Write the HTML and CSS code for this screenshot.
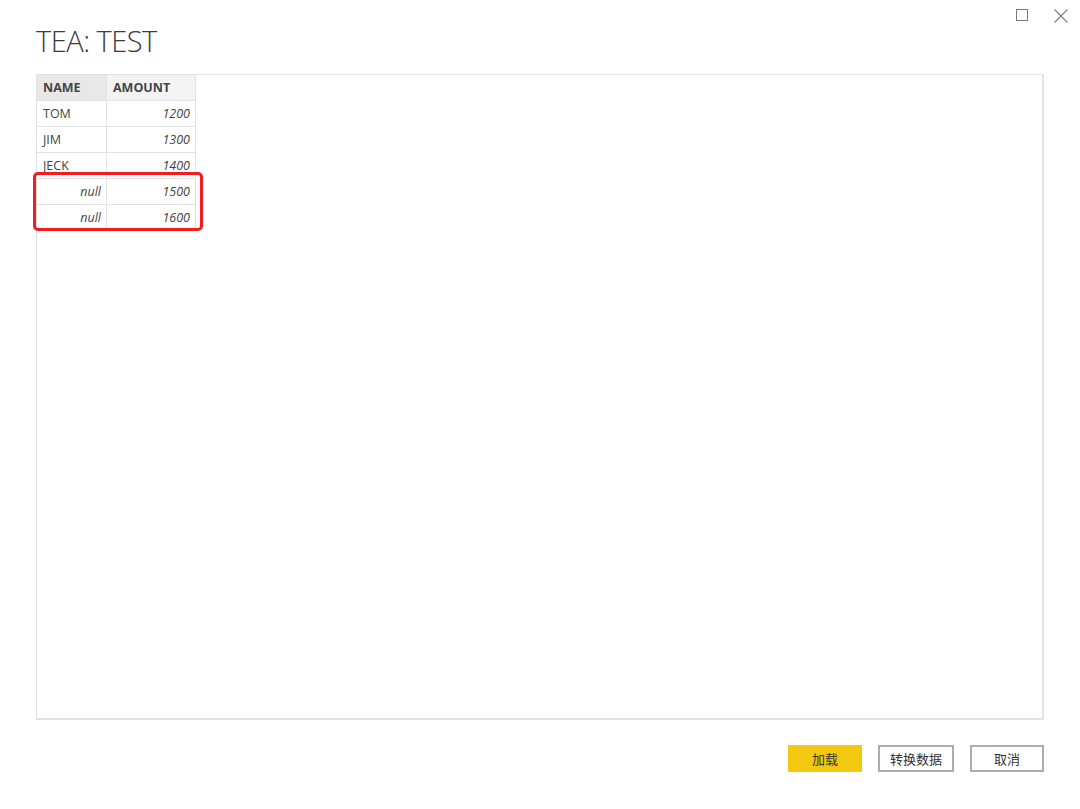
FILE: index.html
```html
<!DOCTYPE html>
<html>
<head>
<meta charset="utf-8">
<link rel="stylesheet" href="styles.css">
</head>
<body>
<div class="dialog">
  <div class="header">
    <h1 class="title">TEA: TEST</h1>
    <div class="controls">
      <svg class="ctl" width="14" height="14" viewBox="0 0 14 14"><rect x="1.5" y="1.5" width="11" height="11" fill="none" stroke="#7a7a7a" stroke-width="1"/></svg>
      <svg class="ctl" width="16" height="16" viewBox="0 0 16 16"><path d="M1.5 1.5 L14.5 14.5 M14.5 1.5 L1.5 14.5" stroke="#7a7a7a" stroke-width="1.1" fill="none"/></svg>
    </div>
  </div>
  <div class="panel">
    <table class="grid">
      <thead>
        <tr><th class="h-name">NAME</th><th class="h-amt">AMOUNT</th></tr>
      </thead>
      <tbody>
        <tr><td>TOM</td><td class="num">1200</td></tr>
        <tr><td>JIM</td><td class="num">1300</td></tr>
        <tr><td>JECK</td><td class="num">1400</td></tr>
        <tr><td class="num">null</td><td class="num">1500</td></tr>
        <tr><td class="num">null</td><td class="num">1600</td></tr>
      </tbody>
    </table>
    <div class="highlight"></div>
  </div>
  <div class="footer">
    <button class="btn primary">加载</button>
    <button class="btn wide">转换数据</button>
    <button class="btn">取消</button>
  </div>
</div>
</body>
</html>
```

FILE: styles.css
```css
html, body {
  margin: 0;
  padding: 0;
  background: #ffffff;
}
.dialog {
  width: 1080px;
  height: 809px;
  box-sizing: border-box;
  padding: 0 36px 0 36px;
  font-family: "Open Sans", "Noto Sans", "Noto Sans CJK SC", sans-serif;
  color: #333;
}
.header {
  display: flex;
  justify-content: space-between;
  align-items: flex-start;
  height: 74px;
}
.title {
  margin: 21px 0 0 0;
  font-size: 29px;
  font-weight: 300;
  line-height: 40px;
  color: #3a3a3a;
  letter-spacing: -0.5px;
}
.controls {
  display: flex;
  gap: 24px;
  margin-top: 8px;
  margin-right: -25px;
}
.ctl { display: block; }
.panel {
  position: relative;
  height: 643px;
  border: 2px solid #e2e2e2;
  border-top-width: 1px;
  border-left-width: 1px;
  border-bottom-width: 2px;
}
.grid {
  border-collapse: collapse;
  font-size: 12.5px;
  color: #444;
}
.grid th, .grid td {
  height: 25px;
  padding: 0 5px 0 6px;
  border: 1px solid #e3e3e3;
  border-top: none;
  border-left: none;
  text-align: left;
}
.grid th {
  font-weight: 700;
  color: #444;
  height: 25px;
}
.h-name {
  width: 58px;
  background: #e8e8e8;
}
.h-amt {
  width: 77px;
  background: #f3f3f3;
}
.grid td.num {
  text-align: right;
  font-style: italic;
}
.highlight {
  position: absolute;
  left: -4px;
  top: 97px;
  width: 164px;
  height: 53px;
  border: 3px solid #f41c1c;
  border-radius: 5px;
}
.footer {
  display: flex;
  justify-content: flex-end;
  gap: 16px;
  margin-top: 25px;
}
.btn {
  width: 74px;
  height: 27px;
  box-sizing: border-box;
  border: 2px solid #acacac;
  background: #fff;
  font-family: "Noto Sans CJK SC", sans-serif;
  font-size: 13px;
  color: #333;
  padding: 0;
}
.btn.wide { width: 76px; }
.btn.primary {
  background: #f2c811;
  border-color: #f2c811;
}
```
